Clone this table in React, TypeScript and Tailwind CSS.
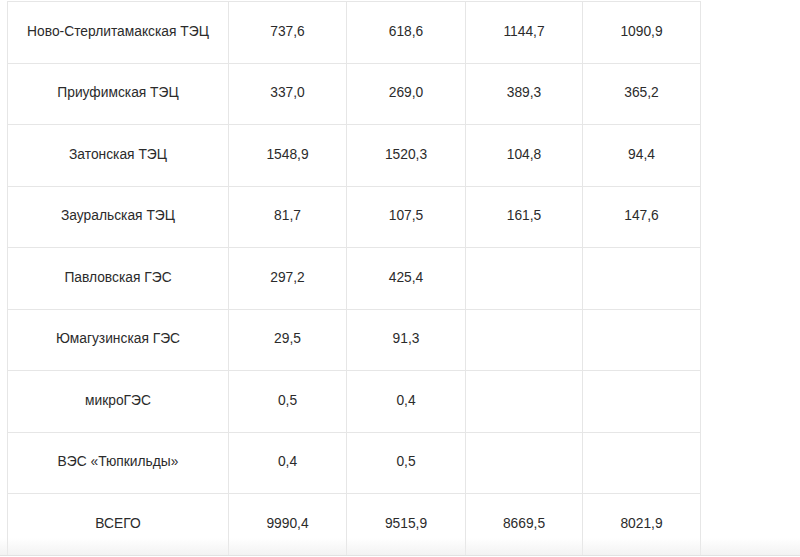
import React from 'react';

type Row = {
  name: string;
  values: string[];
};

const rows: Row[] = [
  { name: 'Ново-Стерлитамакская ТЭЦ', values: ['737,6', '618,6', '1144,7', '1090,9'] },
  { name: 'Приуфимская ТЭЦ', values: ['337,0', '269,0', '389,3', '365,2'] },
  { name: 'Затонская ТЭЦ', values: ['1548,9', '1520,3', '104,8', '94,4'] },
  { name: 'Зауральская ТЭЦ', values: ['81,7', '107,5', '161,5', '147,6'] },
  { name: 'Павловская ГЭС', values: ['297,2', '425,4', '', ''] },
  { name: 'Юмагузинская ГЭС', values: ['29,5', '91,3', '', ''] },
  { name: 'микроГЭС', values: ['0,5', '0,4', '', ''] },
  { name: 'ВЭС «Тюпкильды»', values: ['0,4', '0,5', '', ''] },
  { name: 'ВСЕГО', values: ['9990,4', '9515,9', '8669,5', '8021,9'] },
];

const colWidths = ['w-[221px]', 'w-[118px]', 'w-[119px]', 'w-[117px]', 'w-[118px]'];

export default function App() {
  return (
    <div className="relative h-[557px] w-[800px] overflow-hidden bg-white font-['Liberation_Sans',Arial,sans-serif] text-[#2b2b2b]">
      <div className="pl-[7px] pt-[1px]">
        <table className="border-collapse text-[13.8px]">
          <colgroup>
            {colWidths.map((w, i) => (
              <col key={i} className={w} />
            ))}
          </colgroup>
          <tbody>
            {rows.map((row) => (
              <tr key={row.name} className="h-[61.5px]">
                <td className="border border-[#e6e6e6] px-2 text-center align-middle">{row.name}</td>
                {row.values.map((v, i) => (
                  <td key={i} className="border border-[#e6e6e6] px-2 text-center align-middle">
                    {v}
                  </td>
                ))}
              </tr>
            ))}
          </tbody>
        </table>
      </div>

      {/* bottom scroll shade */}
      <div className="absolute bottom-[1px] left-0 h-[18px] w-full bg-gradient-to-b from-transparent to-[#ececec]/70" />
      <div className="absolute bottom-[1px] left-0 h-px w-full bg-[#e2e2e2]" />
    </div>
  );
}
